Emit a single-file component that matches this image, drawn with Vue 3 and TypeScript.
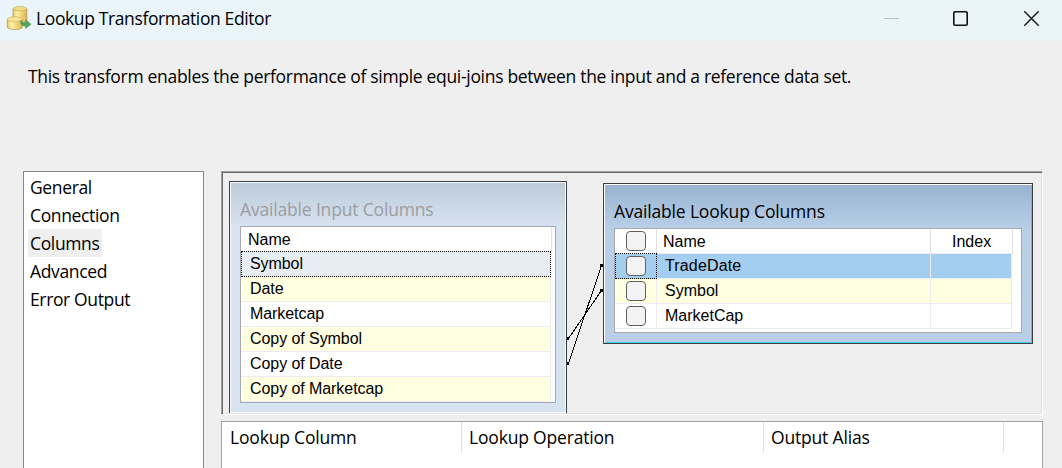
<script setup lang="ts">
interface Column { name: string; tone: string }

const pages: string[] = ['General', 'Connection', 'Columns', 'Advanced', 'Error Output']
const activePage = 'Columns'

const inputColumns: Column[] = [
  { name: 'Symbol', tone: 'focus' },
  { name: 'Date', tone: 'alt' },
  { name: 'Marketcap', tone: '' },
  { name: 'Copy of Symbol', tone: 'alt' },
  { name: 'Copy of Date', tone: '' },
  { name: 'Copy of Marketcap', tone: 'alt' },
]

const lookupColumns: Column[] = [
  { name: 'TradeDate', tone: 'picked' },
  { name: 'Symbol', tone: 'alt' },
  { name: 'MarketCap', tone: '' },
]
</script>

<template>
  <div class="window">
    <header class="titlebar">
      <svg class="app-icon" width="26" height="26" viewBox="0 0 26 26">
        <defs>
          <linearGradient id="gold" x1="0" x2="1" y1="0" y2="0">
            <stop offset="0" stop-color="#e8cd64" />
            <stop offset=".3" stop-color="#fbf0a4" />
            <stop offset="1" stop-color="#dcb74a" />
          </linearGradient>
        </defs>
        <path d="M7 3.800v13c0 1.500 3 2.300 6.900 2.300s6.900-.8 6.900-2.300v-13z" fill="url(#gold)" stroke="#b08d4c" stroke-width=".7" />
        <ellipse cx="13.900" cy="3.600" rx="6.700" ry="2.200" fill="#f1dc86" stroke="#c7a95c" stroke-width=".6" />
        <path d="M1.300 14.500v7.300c0 1.700 3.200 2.700 7.600 2.700s7.600-1 7.600-2.700v-7.300z" fill="url(#gold)" stroke="#b08d4c" stroke-width=".7" />
        <ellipse cx="8.900" cy="14.200" rx="7.500" ry="2.500" fill="#f6e596" stroke="#c7a95c" stroke-width=".6" />
        <path d="M14.800 15.500c.8 1.600 2.200 2.200 4.800 2.100v-2.900l5.500 4.600-5.500 4.200v-2.400c-3.500.2-5.800-1.800-4.800-5.600z" fill="#57a45a" stroke="#4d9452" stroke-width=".5" />
      </svg>
      <span class="title">Lookup Transformation Editor</span>
      <svg class="controls" width="158" height="20" viewBox="0 0 158 20">
        <path d="M1 9.500h15" stroke="#b7c1c4" fill="none" />
        <rect x="70.800" y="2.800" width="13.400" height="13.400" rx="1.200" fill="none" stroke="#111" stroke-width="1.600" />
        <path d="M141.300 2.300l14.400 14.400M155.700 2.300l-14.400 14.400" stroke="#1a1a1a" stroke-width="1.500" fill="none" />
      </svg>
    </header>

    <p class="description">This transform enables the performance of simple equi-joins between the input and a reference data set.</p>

    <main class="body">
      <nav class="pages">
        <div v-for="page in pages" :key="page" class="page">
          <span class="page-label" :class="{ active: page === activePage }">{{ page }}</span>
        </div>
      </nav>

      <section class="content">
        <div class="canvas">
          <div class="node input-node">
            <div class="node-title input-title">Available Input Columns</div>
            <div class="table">
              <div class="input-head">Name</div>
              <div v-for="col in inputColumns" :key="col.name" class="input-row" :class="col.tone">{{ col.name }}</div>
            </div>
          </div>

          <svg class="links" width="36" height="110" viewBox="0 0 36 110" shape-rendering="crispEdges">
            <path d="M1.500 83.500L34.500 35.500M1.500 108.500L34.500 10.500" stroke="#000" fill="none" />
            <path d="M0 82h2v3h-2zM0 107h2v3h-2zM33 9h3v3h-3zM33 34h3v3h-3z" />
          </svg>

          <div class="node lookup-node">
            <div class="node-title">Available Lookup Columns</div>
            <div class="table">
              <div class="lookup-row head">
                <div class="cell check"><i class="box" /></div>
                <div class="cell name">Name</div>
                <div class="cell index">Index</div>
              </div>
              <div v-for="col in lookupColumns" :key="col.name" class="lookup-row" :class="col.tone">
                <div class="cell check"><i class="box" /></div>
                <div class="cell name">{{ col.name }}</div>
                <div class="cell index" />
              </div>
            </div>
          </div>
        </div>

        <div class="grid">
          <div class="grid-head first">Lookup Column</div>
          <div class="grid-head second">Lookup Operation</div>
          <div class="grid-head third">Output Alias</div>
        </div>
      </section>
    </main>
  </div>
</template>

<style>
body { background: #efefef; overflow: hidden; }
</style>

<style scoped>
* { box-sizing: border-box; }
.window {
  width: 1062px; height: 468px; overflow: hidden; display: flex; flex-direction: column;
  background: #efefef; color: #000;
  font: 17.5px/28px "Open Sans", "Noto Sans", sans-serif; white-space: nowrap;
}
.titlebar {
  height: 41px; flex: none; display: flex; align-items: flex-start;
  padding: 5px 21px 0 6px; background: linear-gradient(90deg, #e9f5fa, #eaf5f7);
}
.app-icon { flex: none; }
.title { margin: -1px 0 0 4px; letter-spacing: -.38px; }
.controls { margin: 4px 0 0 auto; flex: none; }
.description { margin: 21px 0 0 28px; height: 109px; flex: none; letter-spacing: -.31px; }
.body { display: flex; gap: 17px; padding-left: 23px; height: 297px; }
.pages { width: 181px; height: 310px; flex: none; border: 1px solid #828790; background: #fff; padding: 1px 4px; }
.page { height: 28px; display: flex; }
.page-label { padding: 0 2px; letter-spacing: -.36px; }
.page-label.active { background: #efefef; width: 74px; }
.content { width: 822px; flex: none; display: flex; flex-direction: column; gap: 6px; }
.canvas {
  height: 244px; flex: none; position: relative; overflow: hidden; border: 1px solid;
  border-color: #a0a0a0 #fff #fff #a0a0a0;
  box-shadow: inset 1px 1px #696969, inset -1px -1px #e3e3e3;
}
.node { position: absolute; border: 1px solid #3c3f44; }
.links { position: absolute; left: 345px; top: 83px; }
.input-node {
  left: 7px; top: 9px; width: 338px; height: 232px; padding: 0 10px; border-bottom: 0;
  background: linear-gradient(#bccad8, #d7e3f1 44px);
  box-shadow: inset 1px 1px #f6f8fa, inset -1px -1px #f6f8fa;
}
.lookup-node {
  left: 381px; top: 11px; width: 430px; height: 161px; padding: 0 10px;
  background: linear-gradient(#97b2cf, #b9cfe8 44px);
  box-shadow: inset 1px 1px #fff, inset -1px -1px #45cbe6;
}
.node-title { height: 44px; padding-top: 13px; line-height: 28px; letter-spacing: -.17px; }
.input-title { color: #9b9ea3; }
.table { border: 1px solid #a6a9b2; background: #fff; font: 16px/24px "Liberation Sans", Arial, sans-serif; }
.input-node .table { height: 177px; }
.lookup-node .table { height: 105px; }
.input-head { width: 311px; height: 24px; padding-left: 7px; line-height: 26px; border-right: 1px solid #e3e3e3; }
.input-row {
  width: 310px; height: 25px; padding-left: 9px; line-height: 23px; letter-spacing: -.07px;
  border-right: 1px solid #ececf0; border-bottom: 1px solid #ececf0;
}
.alt { background: #ffffe1; }
.input-row.focus { height: 26px; border: 1px dotted #000; background: #e8edf2; padding-left: 8px; }
.lookup-row { display: flex; width: 397px; height: 25px; }
.lookup-row.head { width: 398px; }
.cell { border-right: 1px solid #ececf0; border-bottom: 1px solid #ececf0; height: 25px; line-height: 24px; }
.head .cell { border-right-color: #e0e0e0; line-height: 26px; }
.check { width: 42px; flex: none; padding: 2px 0 0 11px; }
.box { display: block; width: 20px; height: 20px; border: 1px solid #606060; border-radius: 4px; background: #f3f3f3; }
.name { width: 274px; flex: none; padding-left: 8px; }
.head .name { padding-left: 6px; }
.index { flex: 1; padding-left: 21px; }
.picked { background: #a4cef0; }
.picked .name { letter-spacing: .15px; }
.picked .check { height: 26px; margin-top: -1px; padding: 2px 0 0 10px; border: 1px dotted #000; }
.grid { flex: none; height: 60px; border: 1px solid #a0a3aa; background: #fff; display: flex; align-items: flex-start; }
.grid-head { height: 30px; border-right: 1px solid #e0e0e0; padding: 1px 0 0 7px; letter-spacing: -.18px; }
.first { width: 240px; padding-left: 8px; }
.second { width: 302px; }
.third { width: 240px; }
</style>
